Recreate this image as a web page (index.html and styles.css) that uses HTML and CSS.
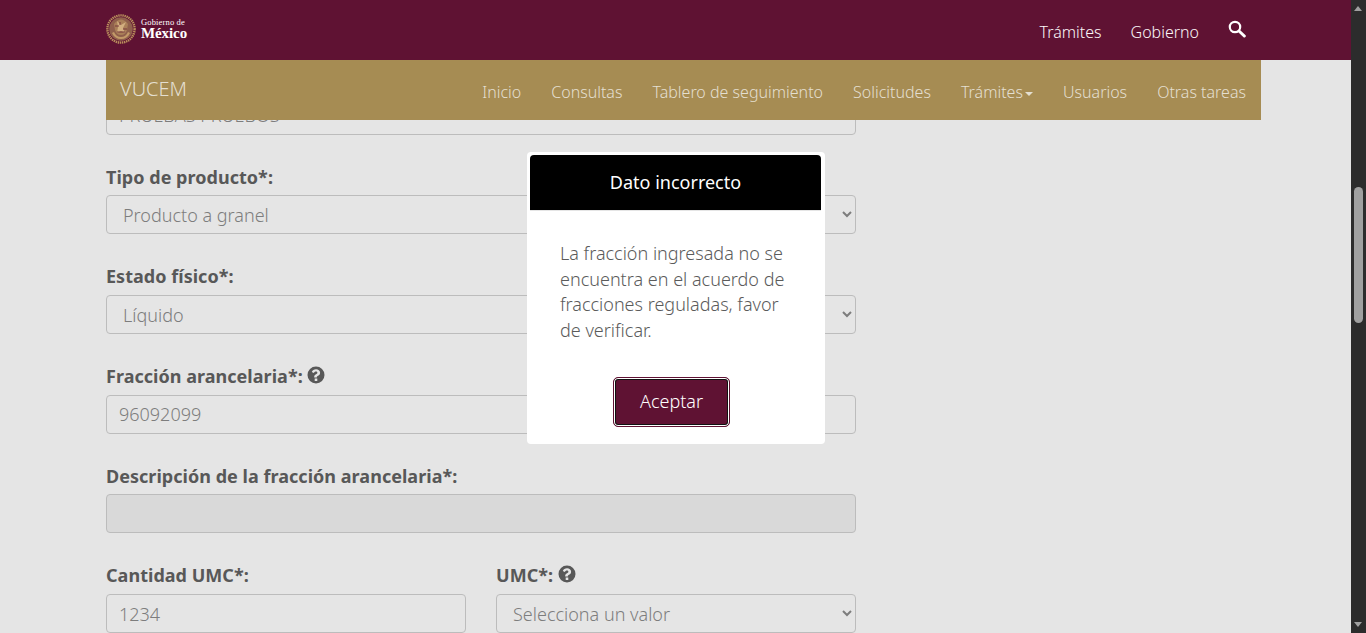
FILE: index.html
```html
<!DOCTYPE html>
<html lang="es">
<head>
<meta charset="utf-8">
<title>VUCEM</title>
<link rel="stylesheet" href="styles.css">
</head>
<body>
<div class="app">
  <div class="page">
    <header class="topbar">
      <a class="logo">
        <svg class="emblem" viewBox="0 0 30 30" width="30" height="30" aria-hidden="true">
          <circle cx="15" cy="15" r="13.6" fill="none" stroke="#b98f5c" stroke-width="2.400" stroke-dasharray="1.400 .7"/>
          <circle cx="15" cy="15" r="11.8" fill="#8f5f4c"/>
          <path d="M6 19c2 4 5 6 9 6s7-2 9-6l-2-1c-1 3-4 5-7 5s-6-2-7-5z" fill="#c39a68"/>
          <path d="M8 10c2-3 5-4.500 7-4.500s5 1.500 7 4.500l-1 6c-1 3-3 5-6 5s-5-2-6-5z" fill="#a97f58"/>
          <path d="M11 7l4 4 5-3-3 6 2 5-4-2-4 2 1-6z" fill="#d3af80"/>
          <path d="M9 12h4M17 15h4M11 18h8M14 8v3" stroke="#6f2f38" stroke-width=".9"/>
        </svg>
        <span class="logo-text"><span class="logo-small">Gobierno de</span><span class="logo-big">México</span></span>
      </a>
      <nav class="topnav">
        <a>Trámites</a>
        <a>Gobierno</a>
        <svg class="search" viewBox="0 0 18 18" width="18" height="18" aria-hidden="true">
          <circle cx="7" cy="7" r="5.200" fill="none" stroke="#fff" stroke-width="2.200"/>
          <path d="M11 11l5.300 5" stroke="#fff" stroke-width="3" stroke-linecap="round"/>
        </svg>
      </nav>
    </header>

    <nav class="subnav">
      <a class="brand">VUCEM</a>
      <ul class="menu">
        <li>Inicio</li>
        <li>Consultas</li>
        <li>Tablero de seguimiento</li>
        <li>Solicitudes</li>
        <li>Trámites<span class="caret"></span></li>
        <li>Usuarios</li>
        <li>Otras tareas</li>
      </ul>
    </nav>

    <main class="content">
      <form class="form">
        <input class="control clipped" type="text" value="PRUEBAS PRUEBOS">

        <div class="group">
          <label class="label">Tipo de producto*:</label>
          <select class="control select"><option>Producto a granel</option></select>
        </div>

        <div class="group">
          <label class="label">Estado físico*:</label>
          <select class="control select"><option>Líquido</option></select>
        </div>

        <div class="group">
          <label class="label">Fracción arancelaria*:
            <svg class="help" viewBox="0 0 18 18" width="18" height="18" aria-hidden="true"><path fill-rule="evenodd" d="M9 .5a8.500 8.500 0 1 1 0 17 8.500 8.500 0 0 1 0-17zM7.700 12.400v2.500h2.600v-2.500zM9 3.300c-2 0-3.500 1-4.200 2.600l1.900 1.200c.5-.9 1.200-1.500 2.200-1.500.9 0 1.500.5 1.500 1.100 0 .7-.6 1-1.400 1.500-1 .6-1.800 1.300-1.800 2.800v.6h2.600v-.3c0-.7.400-1 1.300-1.500 1.100-.7 2-1.500 2-3.100 0-2-2-3.400-3.900-3.400z"/></svg>
          </label>
          <input class="control" type="text" value="96092099">
        </div>

        <div class="group">
          <label class="label">Descripción de la fracción arancelaria*:</label>
          <input class="control disabled" type="text" disabled>
        </div>

        <div class="row">
          <div class="group">
            <label class="label">Cantidad UMC*:</label>
            <input class="control" type="text" value="1234">
          </div>
          <div class="group">
            <label class="label">UMC*:
              <svg class="help" viewBox="0 0 18 18" width="18" height="18" aria-hidden="true"><path fill-rule="evenodd" d="M9 .5a8.500 8.500 0 1 1 0 17 8.500 8.500 0 0 1 0-17zM7.700 12.400v2.500h2.600v-2.500zM9 3.300c-2 0-3.500 1-4.200 2.600l1.900 1.200c.5-.9 1.200-1.500 2.200-1.500.9 0 1.500.5 1.500 1.100 0 .7-.6 1-1.400 1.500-1 .6-1.800 1.300-1.800 2.800v.6h2.600v-.3c0-.7.400-1 1.300-1.500 1.100-.7 2-1.500 2-3.100 0-2-2-3.400-3.900-3.400z"/></svg>
            </label>
            <select class="control select"><option>Selecciona un valor</option></select>
          </div>
        </div>
      </form>
    </main>

    <div class="modal" role="dialog">
      <div class="modal-head">Dato incorrecto</div>
      <p class="modal-body">La fracción ingresada no se encuentra en el acuerdo de fracciones reguladas, favor de verificar.</p>
      <div class="modal-foot"><button class="accept" type="button">Aceptar</button></div>
    </div>
  </div>

  <div class="scrollbar" aria-hidden="true">
    <span class="arrow up"></span>
    <span class="thumb"></span>
    <span class="arrow down"></span>
  </div>
</div>
</body>
</html>
```
FILE: styles.css
```css
* { box-sizing: border-box; }

html, body {
  margin: 0;
  height: 100%;
  overflow: hidden;
}

body {
  background: #e5e5e5;
  color: #5b5b5b;
  font-family: "Noto Sans", "Open Sans", sans-serif;
  font-size: 18px;
}

.app {
  display: flex;
  height: 633px;
}

.page {
  position: relative;
  flex: 1;
  min-width: 0;
  overflow: hidden;
}

/* top bar */
.topbar {
  display: flex;
  align-items: center;
  justify-content: space-between;
  height: 60px;
  padding: 0 105px 0 106px;
  background: #5f1233;
}

.logo {
  display: flex;
  align-items: center;
  gap: 5px;
  margin-bottom: 2px;
}

.logo-text {
  display: flex;
  flex-direction: column;
  color: #fff;
  font-family: "Liberation Serif", serif;
}

.logo-small {
  font-size: 8.500px;
  line-height: 9px;
  letter-spacing: .15px;
}

.logo-big {
  font-size: 15px;
  font-weight: 700;
  line-height: 13px;
  letter-spacing: -.1px;
}

.topnav {
  display: flex;
  align-items: center;
  gap: 29px;
  padding-top: 3px;
  color: #fbf6f8;
  font-size: 16px;
  font-weight: 300;
}

.search { margin-bottom: 6px; }

/* gold nav */
.subnav {
  position: relative;
  z-index: 1;
  display: flex;
  align-items: center;
  justify-content: space-between;
  height: 60px;
  width: 1155px;
  margin-left: 106px;
  padding: 0 15px 0 14px;
  background: #a68c53;
  color: #e4dfd0;
  font-weight: 300;
}

.brand {
  font-size: 20px;
  margin-bottom: 3px;
}

.menu {
  display: flex;
  gap: 30px;
  margin: 4px 0 0;
  padding: 0;
  list-style: none;
  font-size: 16px;
}

.caret {
  display: inline-block;
  margin-left: 2px;
  vertical-align: middle;
  border-top: 4px solid #e4dfd0;
  border-left: 4px solid transparent;
  border-right: 4px solid transparent;
}

/* form */
.content {
  width: 750px;
  margin-left: 106px;
}

.form {
  display: flex;
  flex-direction: column;
  gap: 30px;
}

.control {
  display: block;
  width: 100%;
  height: 39px;
  padding: 0 12px;
  border: 1px solid #bcbcbc;
  border-radius: 4px;
  background: transparent;
  color: #7d7d7d;
  font-family: inherit;
  font-size: 18px;
  font-weight: 300;
}

.clipped { margin-top: -24.350px; }

.select { padding-left: 12px; }

.disabled { background: #d9d9d9; }

.group {
  display: flex;
  flex-direction: column;
  gap: 5px;
  min-width: 0;
}

.label {
  display: block;
  height: 25.700px;
  color: #585858;
  font-weight: 700;
  letter-spacing: .03px;
  line-height: 25.700px;
}

.help {
  fill: #585858;
  vertical-align: -1px;
}

.row {
  display: grid;
  grid-template-columns: 360px 360px;
  gap: 30px;
}

/* dialog */
.modal {
  position: absolute;
  top: 152px;
  left: 527px;
  width: 298px;
  height: 292px;
  padding: 3px;
  border-radius: 4px;
  background: #fff;
}

.modal-head {
  width: 291px;
  height: 55px;
  background: #000;
  border-radius: 4px 4px 0 0;
  box-shadow: 0 1px #e5e5e5;
  color: #fff;
  font-size: 18px;
  font-weight: 400;
  line-height: 55px;
  text-align: center;
}

.modal-body {
  margin: 31px 0 0;
  padding: 0 27px 0 30px;
  color: #5b5b5b;
  font-size: 18px;
  font-weight: 300;
  line-height: 25.700px;
}

.modal-foot {
  display: flex;
  margin: 33px 0 0 83px;
}

.accept {
  width: 117px;
  height: 50px;
  padding: 0 0 2px;
  border: 1px solid #5f1233;
  border-radius: 5px;
  background: #5f1233;
  box-shadow: inset 0 0 0 1px #fff, inset 0 0 0 2px #111;
  color: #fff;
  font-family: inherit;
  font-size: 18px;
  font-weight: 300;
}

/* scrollbar */
.scrollbar {
  position: relative;
  flex: 0 0 15px;
  background: #2c2c2c;
}

.thumb {
  position: absolute;
  top: 187px;
  left: 3px;
  width: 9px;
  height: 136px;
  border-radius: 5px;
  background: #a0a0a0;
}

.arrow {
  position: absolute;
  left: 3px;
  width: 0;
  height: 0;
  border-left: 4.500px solid transparent;
  border-right: 4.500px solid transparent;
}

.up {
  top: 6px;
  border-bottom: 5px solid #a0a0a0;
}

.down {
  bottom: 6px;
  border-top: 5px solid #a0a0a0;
}
```
